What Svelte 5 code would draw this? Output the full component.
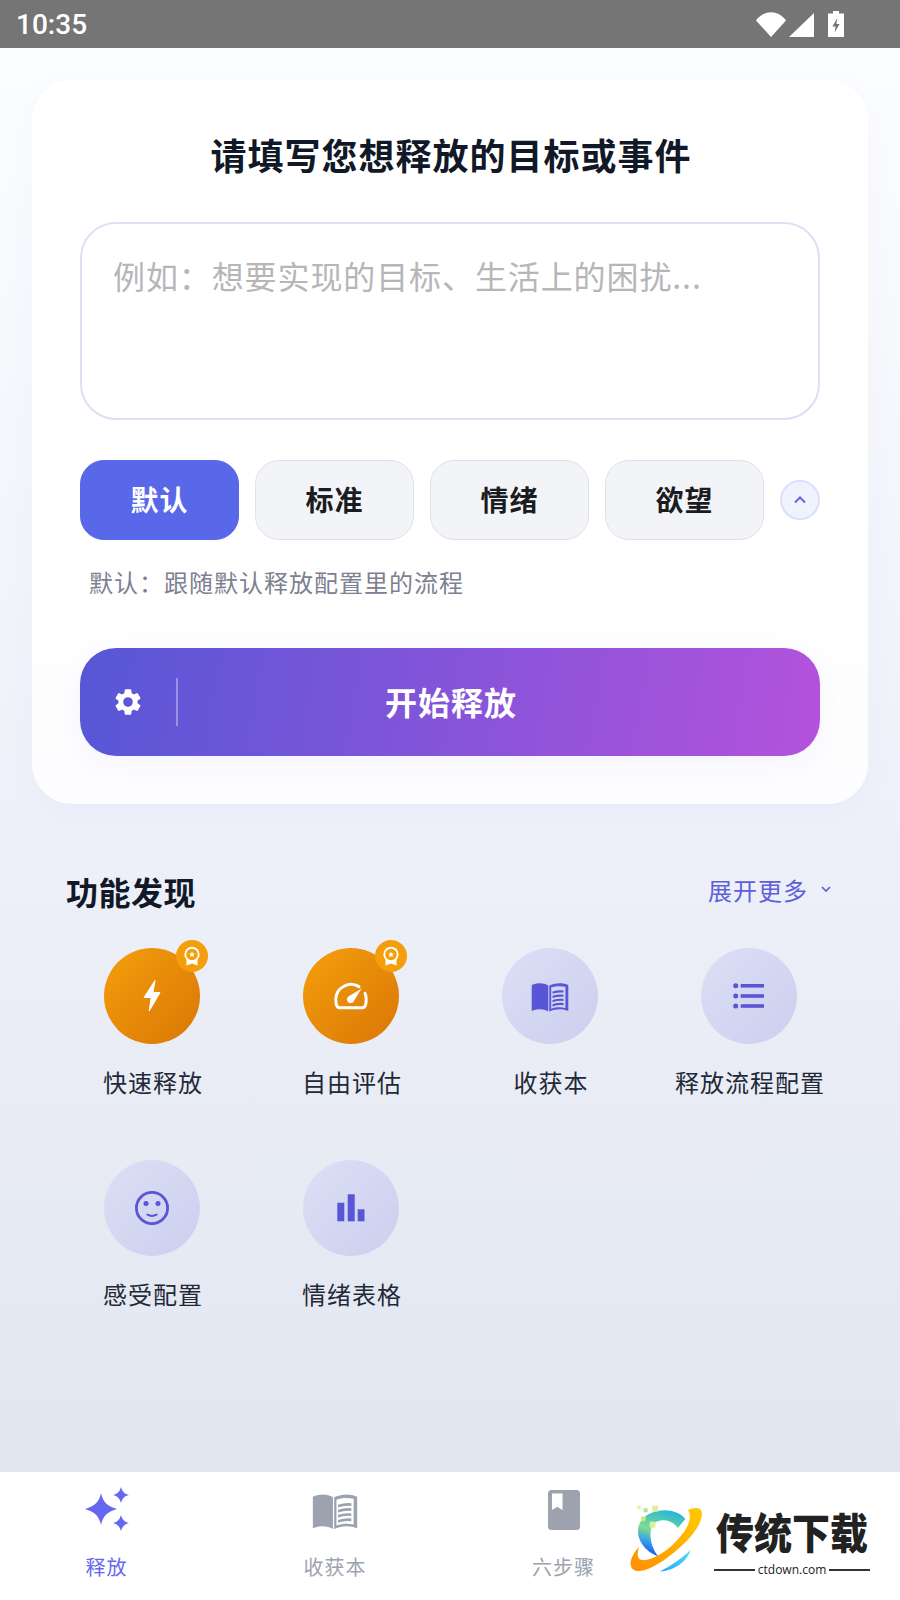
<script>
  const chips = ["默认", "标准", "情绪", "欲望"];
  let active = $state("默认");

  const features = [
    { label: "快速释放", icon: "bolt", pro: true },
    { label: "自由评估", icon: "gauge", pro: true },
    { label: "收获本", icon: "book" },
    { label: "释放流程配置", icon: "list" },
    { label: "感受配置", icon: "face" },
    { label: "情绪表格", icon: "bars" },
  ];
</script>

{#snippet bookPath()}
  <path d="M29.7 37C35.5 34.4 41.8 34.6 46.3 37.4V63.6C41.6 60.8 35.5 60.6 29.7 63Z" />
  <path
    fill-rule="evenodd"
    d="M66.3 37C60.5 34.4 54 34.6 47.3 37.4V63.6C54 60.8 60.5 60.6 66.3 63ZM49.2 39.6C53.5 38 58.5 37.8 63.4 38.8V60C58.5 58.9 53.5 59.2 49.2 60.8Z"
  />
  <path d="M50.5 43.6Q56 41.8 61.5 42.4V44.6Q56 44 50.5 45.8ZM50.5 47.8Q56 46 61.5 46.6V48.8Q56 48.2 50.5 50ZM50.5 52Q56 50.2 61.5 50.8V53Q56 52.4 50.5 54.2ZM50.5 56.2Q56 54.4 61.5 55V57.2Q56 56.6 50.5 58.4Z" />
{/snippet}

<div class="page">
  <header class="status">
    <span class="time">10:35</span>
    <svg class="status-icons" width="90" height="30" viewBox="756 8 90 30">
      <path d="M756 19.5C764 8.5 778 8.5 786 19.5L771 36Z" fill="#fff" />
      <path d="M814 12V36H789Z" fill="#fff" />
      <path d="M833 10H839V12.5H844V36H828V12.5H833Z" fill="#fff" />
      <path d="M837.4 17L832.4 25.6H835.6L834.6 31.6L839.6 23H836.4Z" fill="#757575" />
    </svg>
  </header>

  <main class="main">
    <section class="card">
      <h1>请填写您想释放的目标或事件</h1>
      <textarea placeholder="例如：想要实现的目标、生活上的困扰..."></textarea>

      <div class="chips">
        {#each chips as chip}
          <button class="chip" class:active={active === chip} onclick={() => (active = chip)}>{chip}</button>
        {/each}
        <button class="collapse" aria-label="收起">
          <svg width="14" height="10" viewBox="0 0 14 10">
            <path d="M2 7.5L7 2.5L12 7.5" fill="none" stroke="#5d66e6" stroke-width="2" />
          </svg>
        </button>
      </div>

      <p class="hint">默认：跟随默认释放配置里的流程</p>

      <div class="start">
        <span class="gear">
          <svg width="32" height="32" viewBox="0 0 24 24">
            <path
              fill="#fff"
              d="M19.14 12.94c.04-.3.06-.61.06-.94 0-.32-.02-.64-.07-.94l2.03-1.58a.49.49 0 0 0 .12-.61l-1.92-3.32a.49.49 0 0 0-.59-.22l-2.39.96c-.5-.38-1.03-.7-1.62-.94l-.36-2.54a.48.48 0 0 0-.48-.41h-3.84c-.24 0-.43.17-.47.41l-.36 2.54c-.59.24-1.13.57-1.62.94l-2.39-.96a.49.49 0 0 0-.59.22L2.74 8.87c-.12.21-.08.47.12.61l2.03 1.58c-.05.3-.09.63-.09.94s.02.64.07.94l-2.03 1.58a.49.49 0 0 0-.12.61l1.92 3.32c.12.22.37.29.59.22l2.39-.96c.5.38 1.03.7 1.62.94l.36 2.54c.05.24.24.41.48.41h3.84c.24 0 .44-.17.47-.41l.36-2.54c.59-.24 1.13-.56 1.62-.94l2.39.96c.22.08.47 0 .59-.22l1.92-3.32c.12-.22.07-.47-.12-.61l-2.01-1.58zM12 15.6A3.6 3.6 0 1 1 12 8.4a3.6 3.6 0 0 1 0 7.2z"
            />
          </svg>
        </span>
        <span class="divider"></span>
        <span class="start-label">开始释放</span>
      </div>
    </section>

    <div class="section-head">
      <h2>功能发现</h2>
      <span class="more">
        展开更多
        <svg width="12" height="8" viewBox="0 0 12 8">
          <path d="M2 2L6 6L10 2" fill="none" stroke="#5d5fd8" stroke-width="1.6" />
        </svg>
      </span>
    </div>

    <div class="features">
      {#each features as f}
        <div class="feature">
          <div class="circle" class:gold={f.pro}>
            <svg width="96" height="96" viewBox="0 0 96 96" fill="#5856d6">
              {#if f.icon === "bolt"}
                <path
                  fill="#fff"
                  stroke="#fff"
                  stroke-width="1"
                  stroke-linejoin="round"
                  d="M51 32.5L40 49.5H47.2L45.2 63L56 44.6H49Z"
                />
              {:else if f.icon === "gauge"}
                <path
                  fill="none"
                  stroke="#fff"
                  stroke-width="3"
                  stroke-linecap="round"
                  d="M56 38.6A15.3 15.3 0 0 0 32.8 51C32.8 55 33.4 59.8 36.5 59.8H59.5C62.6 59.8 63.2 55 63.2 51C63.2 49 62.8 47.2 62 45.4"
                />
                <path fill="#fff" d="M58.6 40.4L50.6 53.4A3.6 3.6 0 1 1 45.4 48.6Z" />
              {:else if f.icon === "book"}
                {@render bookPath()}
              {:else if f.icon === "list"}
                <circle cx="34.7" cy="37.8" r="2.5" />
                <circle cx="34.7" cy="48" r="2.5" />
                <circle cx="34.7" cy="58" r="2.5" />
                <rect x="39.7" y="36" width="23.3" height="3.6" />
                <rect x="39.7" y="46.2" width="23.3" height="3.6" />
                <rect x="39.7" y="56.2" width="23.3" height="3.6" />
              {:else if f.icon === "face"}
                <circle cx="48" cy="48" r="15.6" fill="none" stroke="#5856d6" stroke-width="2.8" />
                <circle cx="42" cy="43.5" r="2.5" />
                <circle cx="54" cy="43.5" r="2.5" />
                <path d="M43.4 54.6Q48 57.2 52.6 54.6" fill="none" stroke="#5856d6" stroke-width="2" stroke-linecap="round" />
              {:else if f.icon === "bars"}
                <rect x="34.3" y="42.7" width="7" height="18.6" />
                <rect x="44.7" y="34.3" width="7" height="27" />
                <rect x="54.7" y="49.3" width="6.8" height="12" />
              {/if}
            </svg>
            {#if f.pro}
              <span class="badge">
                <svg width="32" height="32" viewBox="0 0 32 32">
                  <path d="M10.5 18V25.6L16 23.4L21.5 25.6V18Z" fill="#fff" />
                  <circle cx="16" cy="14.4" r="6.7" fill="#f59e0b" stroke="#fff" stroke-width="1.9" />
                  <path d="M16 11.4L16.9 13.5L19 13.7L17.4 15L17.9 17.2L16 16L14.1 17.2L14.6 15L13 13.7L15.1 13.5Z" fill="#fff" />
                </svg>
              </span>
            {/if}
          </div>
          <span class="feature-label">{f.label}</span>
        </div>
      {/each}
    </div>
  </main>

  <nav class="tabs">
    <div class="tab current">
      <svg width="48" height="46" viewBox="82 1488 48 46" fill="#6468f0">
        <path d="M100 1494C102 1503 106 1507 116 1510C106 1513 102 1517 100 1526C98 1517 94 1513 84 1510C94 1507 98 1503 100 1494Z" />
        <path d="M120 1488C121.2 1492.5 123.5 1494.8 128 1496C123.5 1497.2 121.2 1499.5 120 1504C118.8 1499.5 116.5 1497.2 112 1496C116.5 1494.8 118.8 1492.5 120 1488Z" />
        <path d="M120 1516C121.2 1520.5 123.5 1522.8 128 1524C123.5 1525.2 121.2 1527.5 120 1532C118.8 1527.5 116.5 1525.2 112 1524C116.5 1522.8 118.8 1520.5 120 1516Z" />
      </svg>
      <span>释放</span>
    </div>
    <div class="tab">
      <svg width="46" height="46" viewBox="29 29 38 38" fill="#9ca3af">
        {@render bookPath()}
      </svg>
      <span>收获本</span>
    </div>
    <div class="tab">
      <svg width="46" height="46" viewBox="0 0 46 46">
        <rect x="7" y="3" width="32" height="40" rx="3.5" fill="#9ca3af" />
        <path d="M11 6.5H21.5V23L16.2 19.8L11 23Z" fill="#fff" />
      </svg>
      <span>六步骤</span>
    </div>
  </nav>

  <div class="watermark">
    <svg class="logo" width="78" height="73" viewBox="55 40 235 220">
      <defs>
        <linearGradient id="orbit" x1="0" y1="1" x2="1" y2="0">
          <stop offset="0" stop-color="#ff8f00" />
          <stop offset="1" stop-color="#ffcb00" />
        </linearGradient>
        <linearGradient id="ring" x1="0.7" y1="0" x2="0.4" y2="1">
          <stop offset="0" stop-color="#23b5dc" />
          <stop offset="0.5" stop-color="#7ddc90" />
          <stop offset="0.75" stop-color="#39a0e8" />
          <stop offset="1" stop-color="#1a5cf0" />
        </linearGradient>
        <linearGradient id="tail" x1="1" y1="0" x2="0" y2="1">
          <stop offset="0" stop-color="#55dcff" />
          <stop offset="1" stop-color="#28a4ff" />
        </linearGradient>
      </defs>
      <path fill="url(#ring)" d="M125 70C160 55 205 60 228 88L205 115C190 92 155 85 135 100C115 120 120 165 145 200C115 190 85 160 85 125C85 100 100 80 125 70Z" />
      <path fill="url(#orbit)" d="M236 62C262 48 282 55 277 80C270 125 215 175 160 215C120 240 85 255 68 238C55 222 68 195 88 172C82 195 82 210 98 212C125 215 175 185 205 150C235 118 250 85 236 62Z" />
      <path fill="url(#tail)" d="M243 182C235 215 195 245 150 247C185 230 220 205 243 182Z" />
      <rect x="83" y="48" width="10" height="10" fill="#e2efa0" />
      <rect x="102" y="56" width="12" height="12" fill="#b6e48e" />
      <rect x="128" y="48" width="18" height="18" fill="#dcef9e" />
      <rect x="94" y="81" width="14" height="14" fill="#c3e98e" />
      <rect x="120" y="96" width="18" height="18" fill="#d6f0a0" />
    </svg>
    <div class="brand">
      <span class="brand-name">传统下载</span>
      <span class="brand-url">ctdown.com</span>
    </div>
  </div>
</div>

<style>
  :global(body) {
    margin: 0;
  }

  .page {
    position: relative;
    width: 900px;
    height: 1600px;
    display: flex;
    flex-direction: column;
    overflow: hidden;
    font-family: "Noto Sans CJK SC", "Noto Sans", sans-serif;
    background: linear-gradient(180deg, #fcfdff 48px, #eef1f9 800px, #e2e6f0 1472px);
  }

  .status {
    height: 48px;
    flex: none;
    display: flex;
    align-items: center;
    justify-content: space-between;
    padding: 0 54px 0 16px;
    background: #757575;
  }

  .time {
    padding-top: 2px;
    font-family: Roboto, sans-serif;
    font-size: 28px;
    font-weight: 500;
    line-height: 46px;
    color: #fff;
  }

  .status-icons {
    display: block;
  }

  .main {
    flex: 1;
    padding: 32px 32px 0;
  }

  .card {
    padding: 52px 48px 48px;
    border-radius: 40px;
    background: linear-gradient(180deg, #fff 60%, #fdfdff 100%);
    box-shadow: 0 8px 32px rgba(90, 100, 200, 0.03);
  }

  h1 {
    margin: 0 0 46px;
    padding-left: 2px;
    font-size: 36px;
    line-height: 44px;
    font-weight: 700;
    letter-spacing: 1px;
    text-align: center;
    color: #111827;
  }

  textarea {
    display: block;
    box-sizing: border-box;
    width: 100%;
    height: 198px;
    padding: 29px 31px 0;
    border: 2px solid #dedef6;
    border-radius: 36px;
    outline: none;
    resize: none;
    background: #fff;
    font-family: inherit;
    font-size: 32px;
    line-height: 44px;
    letter-spacing: 0.9px;
  }

  textarea::placeholder {
    color: #b6b6b8;
    opacity: 1;
  }

  .chips {
    display: flex;
    align-items: center;
    margin-top: 40px;
    gap: 16px;
  }

  .chip {
    width: 159px;
    height: 80px;
    padding: 0 0 2px;
    border: 1px solid #dfe1ec;
    border-radius: 24px;
    background: #f3f4f8;
    font-family: inherit;
    font-size: 28px;
    font-weight: 700;
    letter-spacing: 1px;
    color: #1a1c22;
  }

  .chip.active {
    border-color: #5868e8;
    background: #5868e8;
    color: #fff;
  }

  .collapse {
    width: 40px;
    height: 40px;
    padding: 0;
    display: flex;
    align-items: center;
    justify-content: center;
    border: 2px solid #dbe0f8;
    border-radius: 50%;
    background: #f0f2fe;
  }

  .hint {
    margin: 24px 0 0 9px;
    font-size: 24px;
    line-height: 36px;
    letter-spacing: 1px;
    color: #7d8090;
  }

  .start {
    position: relative;
    height: 108px;
    margin-top: 48px;
    padding-bottom: 3px;
    box-sizing: border-box;
    display: flex;
    align-items: center;
    justify-content: center;
    border-radius: 36px;
    background: linear-gradient(100deg, #5657d6 0%, #b452dc 100%);
    box-shadow: 0 8px 24px rgba(90, 90, 210, 0.06);
  }

  .gear {
    position: absolute;
    left: 32px;
    top: 38px;
    display: flex;
  }

  .divider {
    position: absolute;
    left: 96px;
    top: 30px;
    width: 2px;
    height: 48px;
    background: rgba(255, 255, 255, 0.35);
  }

  .start-label {
    margin-left: 2px;
    font-size: 32px;
    font-weight: 700;
    letter-spacing: 1px;
    color: #fff;
  }

  .section-head {
    display: flex;
    align-items: center;
    justify-content: space-between;
    margin-top: 67px;
    padding: 0 36px 0 34px;
  }

  h2 {
    margin: 0;
    font-size: 32px;
    line-height: 40px;
    font-weight: 700;
    letter-spacing: 0.5px;
    color: #111827;
  }

  .more {
    display: flex;
    align-items: center;
    gap: 12px;
    margin-bottom: 4px;
    font-size: 24px;
    letter-spacing: 1px;
    color: #5d5fd8;
  }

  .features {
    display: grid;
    grid-template-columns: repeat(4, 199px);
    row-gap: 59px;
    margin: 37px 0 0 20.5px;
  }

  .feature {
    display: flex;
    flex-direction: column;
    align-items: center;
    gap: 20px;
  }

  .circle {
    position: relative;
    width: 96px;
    height: 96px;
    border-radius: 50%;
    background: linear-gradient(135deg, #dcdff5, #cccfee);
  }

  .circle svg {
    display: block;
  }

  .circle.gold {
    background: linear-gradient(135deg, #f59e0b, #d97706);
  }

  .badge {
    position: absolute;
    top: -8px;
    right: -8px;
    width: 32px;
    height: 32px;
    border-radius: 50%;
    background: #f59e0b;
  }

  .feature-label {
    margin-left: 2px;
    margin-bottom: 1px;
    font-size: 24px;
    line-height: 36px;
    letter-spacing: 1px;
    color: #1f2937;
    white-space: nowrap;
  }

  .tabs {
    flex: none;
    height: 128px;
    display: grid;
    grid-template-columns: repeat(3, 212px);
    column-gap: 16.5px;
    background: #fff;
  }

  .tab {
    display: flex;
    flex-direction: column;
    align-items: center;
    padding-top: 15px;
    padding-left: 1px;
    font-size: 20px;
    line-height: 28px;
    letter-spacing: 1px;
    color: #9ca3af;
  }

  .tab svg {
    margin-bottom: 20px;
  }

  .tab.current {
    color: #6468f0;
  }

  .watermark {
    position: absolute;
    right: 30px;
    bottom: 22px;
    display: flex;
    align-items: flex-start;
    gap: 8px;
    background: #fff;
  }

  .brand {
    display: flex;
    flex-direction: column;
    width: 156px;
  }

  .brand-name {
    margin-bottom: 4px;
    font-size: 38px;
    line-height: 55px;
    font-weight: 900;
    white-space: nowrap;
    color: #222;
    text-align: center;
    transform: scaleY(1.12);
  }

  .brand-url {
    display: flex;
    align-items: center;
    gap: 3px;
    font-family: "Open Sans", sans-serif;
    font-size: 12px;
    line-height: 16px;
    color: #222;
  }

  .brand-url::before,
  .brand-url::after {
    content: "";
    flex: 1;
    height: 2px;
    background: #333;
  }
</style>
